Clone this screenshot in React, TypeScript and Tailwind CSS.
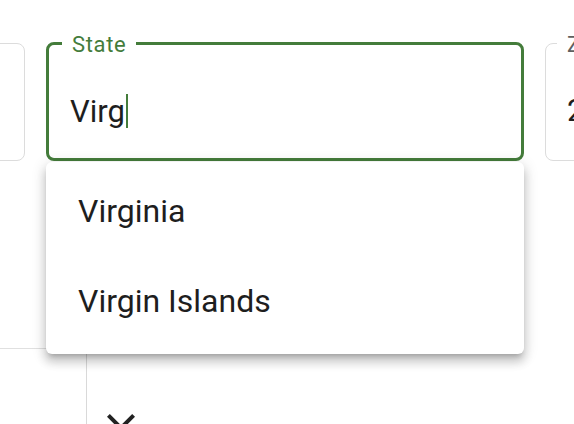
import React from 'react';

const GREEN = '#447c3b';

function CloseIcon() {
  return (
    <svg viewBox="0 0 24 24" className="w-[48px] h-[48px] fill-[#222]">
      <path d="M19 6.41L17.59 5 12 10.59 6.41 5 5 6.41 10.59 12 5 17.59 6.41 19 12 13.41 17.59 19 19 17.59 13.41 12z" />
    </svg>
  );
}

function SideField({ label, value }: { label?: string; value?: string }) {
  return (
    <div className="relative w-[200px] h-[118px] mt-[1px] shrink-0 border border-[#dcdcdc] rounded-[8px]">
      {label && (
        <span className="absolute left-[11px] top-[-10px] px-[10px] bg-white text-[22px] leading-[22px] text-[#5f5f5f]">
          {label}
        </span>
      )}
      {value && (
        <div className="pt-[51px] pl-[21px] text-[31px] leading-[32px] text-[#1e1e1e]">{value}</div>
      )}
    </div>
  );
}

export default function App() {
  const options = ['Virginia', 'Virgin Islands'];

  return (
    <div className="w-[574px] h-[424px] overflow-hidden bg-white font-[Roboto,sans-serif]">
      <div className="flex items-start gap-[21px] pt-[42px] -ml-[175px]">
        <SideField />

        <div className="relative w-[478px] shrink-0 z-10">
          <div className="relative h-[119px] border-[3px] border-[#447c3b] rounded-[8px]">
            <span
              className="absolute left-[13px] top-[-11px] px-[10px] bg-white text-[22px] leading-[22px] tracking-[0.03em]"
              style={{ color: GREEN }}
            >
              State
            </span>
            <div className="flex items-start pt-[49px] pl-[21px]">
              <span className="mt-[2px] text-[31px] leading-[32px] text-[#1e1e1e]">Virg</span>
              <span className="ml-[1px] w-[2px] h-[34px] bg-[#447c3b]" />
            </div>
          </div>

          <ul className="absolute left-0 top-full mt-[1px] w-full pt-[4px] pb-[8px] bg-white rounded-[6px] shadow-[0_5px_5px_-3px_rgba(0,0,0,0.2),0_8px_10px_1px_rgba(0,0,0,0.14),0_3px_14px_2px_rgba(0,0,0,0.12)]">
            {options.map((opt) => (
              <li key={opt} className="h-[90px] flex items-center px-[32px] text-[32px] text-[#1e1e1e]">
                {opt}
              </li>
            ))}
          </ul>
        </div>

        <SideField label="Zip" value="23220" />
      </div>

      <div className="mt-[187px] w-[480px] flex border-t border-[#e0e0e0]">
        <div className="w-[87px] h-[80px] shrink-0 border-r border-[#d9d9d9]" />
        <div className="pl-[10px] pt-[55px]">
          <CloseIcon />
        </div>
      </div>
    </div>
  );
}
